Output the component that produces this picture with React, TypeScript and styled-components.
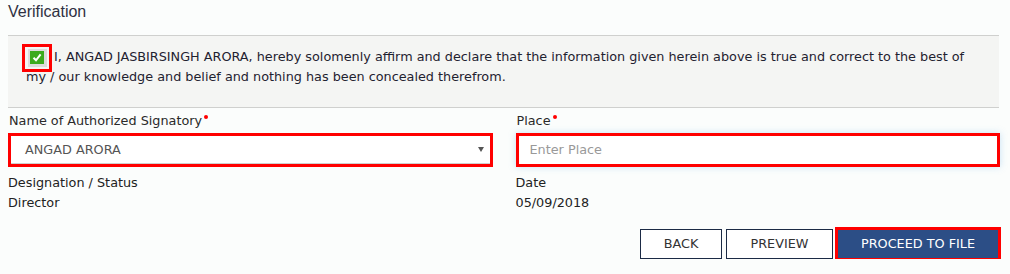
import React from "react";
import styled, { createGlobalStyle } from "styled-components";

const Global = createGlobalStyle`
  html, body { margin: 0; padding: 0; background: #fbfdfc; }
  body { font-family: "DejaVu Sans", Verdana, sans-serif; font-size: 12.8px; color: #222; }
  * { box-sizing: border-box; }
`;

const Page = styled.div`
  width: 1010px;
  padding: 0 10px 0 8px;
`;

const Heading = styled.h2`
  margin: 0 0 11px;
  font-family: "Liberation Sans", Arial, sans-serif;
  font-weight: normal;
  font-size: 16px;
  line-height: 24px;
  color: #2f3142;
`;

const Panel = styled.div`
  margin-right: 1px;
  background: #f4f5f3;
  border-top: 1px solid #cfd0ce;
  border-bottom: 1px solid #cfd0ce;
  padding: 11px 18px 21px 18px;
`;

const Declaration = styled.p`
  margin: 0;
  line-height: 19px;
  color: #1f2230;
`;

const CheckFrame = styled.span`
  display: inline-flex;
  align-items: center;
  justify-content: center;
  width: 30px;
  height: 28px;
  margin: -5px 2px -5px -4px;
  border: 3px solid #f00;
  vertical-align: middle;
`;

const CheckWell = styled.span`
  display: flex;
  align-items: center;
  justify-content: center;
  width: 19px;
  height: 18px;
  background: #dcdcdc;
`;

const CheckBox = styled.span`
  display: flex;
  align-items: center;
  justify-content: center;
  width: 14px;
  height: 13px;
  background: #3caa1e;
`;

const Grid = styled.div`
  display: grid;
  grid-template-columns: 1fr 1fr;
  column-gap: 23px;
  margin-top: 3px;
`;

const Field = styled.div`
  display: flex;
  flex-direction: column;
`;

const Label = styled.label<{ $required?: boolean }>`
  line-height: 19px;
  color: #2a2a2a;
  padding-left: 1px;
  margin-bottom: 3px;
  ${(p) =>
    p.$required &&
    `
    &::after {
      content: "";
      display: inline-block;
      width: 4px;
      height: 4px;
      margin-left: 2px;
      border-radius: 50%;
      background: #f00;
      vertical-align: top;
      margin-top: 4px;
    }
  `}
`;

const Control = styled.div<{ $focus?: boolean }>`
  height: 34px;
  border: 3px solid #f00;
  background: #fff;
  display: flex;
  align-items: center;
  padding-left: ${(p) => (p.$focus ? "11px" : "14px")};
  color: #555;
  ${(p) => (p.$focus ? "box-shadow: 0 0 7px rgba(102,175,233,0.35);" : "")}
`;

const SelectInner = styled.div`
  flex: 1;
  align-self: stretch;
  display: flex;
  align-items: center;
  justify-content: space-between;
  padding-right: 6px;
  border-bottom: 1px solid #cfcfcf;
  margin-left: -14px;
  padding-left: 14px;
`;

const Arrow = styled.span`
  width: 0;
  height: 0;
  border-left: 3px solid transparent;
  border-right: 3px solid transparent;
  border-top: 5px solid #555;
`;

const Input = styled.input`
  flex: 1;
  border: none;
  outline: none;
  background: transparent;
  font: inherit;
  color: #555;
  padding: 0;
  &::placeholder { color: #999; }
`;

const InfoBlock = styled.div`
  margin-top: 6px;
  display: flex;
  flex-direction: column;
`;

const InfoLine = styled.div`
  line-height: 20px;
  color: #222;
`;

const Actions = styled.div`
  display: flex;
  justify-content: flex-end;
  gap: 4px;
  margin-top: 16px;
  padding-right: 1px;
`;

const Button = styled.button<{ $primary?: boolean; $w: number }>`
  width: ${(p) => p.$w}px;
  height: 30px;
  padding: 0;
  font: inherit;
  border: 1px solid #1b2a45;
  background: ${(p) => (p.$primary ? "#2c4e86" : "#fff")};
  color: ${(p) => (p.$primary ? "#fff" : "#333")};
  ${(p) => (p.$primary ? "outline: 3px solid #f00; outline-offset: -1px;" : "")}
  cursor: pointer;
`;

export default function App() {
  return (
    <>
      <Global />
      <Page>
        <Heading>Verification</Heading>
        <Panel>
          <Declaration>
            <CheckFrame>
              <CheckWell>
                <CheckBox>
                  <svg width="10" height="9" viewBox="0 0 10 9">
                    <path d="M1.5 4.8 L4 7.3 L8.6 1.4" stroke="#fff" strokeWidth="2" fill="none" />
                  </svg>
                </CheckBox>
              </CheckWell>
            </CheckFrame>
            I, ANGAD JASBIRSINGH ARORA, hereby solomenly affirm and declare that the information given herein above is true and correct to the best of my / our knowledge and belief and nothing has been concealed therefrom.
          </Declaration>
        </Panel>
        <Grid>
          <Field>
            <Label $required>Name of Authorized Signatory</Label>
            <Control>
              <SelectInner>
                <span>ANGAD ARORA</span>
                <Arrow />
              </SelectInner>
            </Control>
            <InfoBlock>
              <InfoLine>Designation / Status</InfoLine>
              <InfoLine>Director</InfoLine>
            </InfoBlock>
          </Field>
          <Field>
            <Label $required>Place</Label>
            <Control $focus>
              <Input placeholder="Enter Place" />
            </Control>
            <InfoBlock>
              <InfoLine>Date</InfoLine>
              <InfoLine>05/09/2018</InfoLine>
            </InfoBlock>
          </Field>
        </Grid>
        <Actions>
          <Button $w={82}>BACK</Button>
          <Button $w={107}>PREVIEW</Button>
          <Button $w={162} $primary>PROCEED TO FILE</Button>
        </Actions>
      </Page>
    </>
  );
}
